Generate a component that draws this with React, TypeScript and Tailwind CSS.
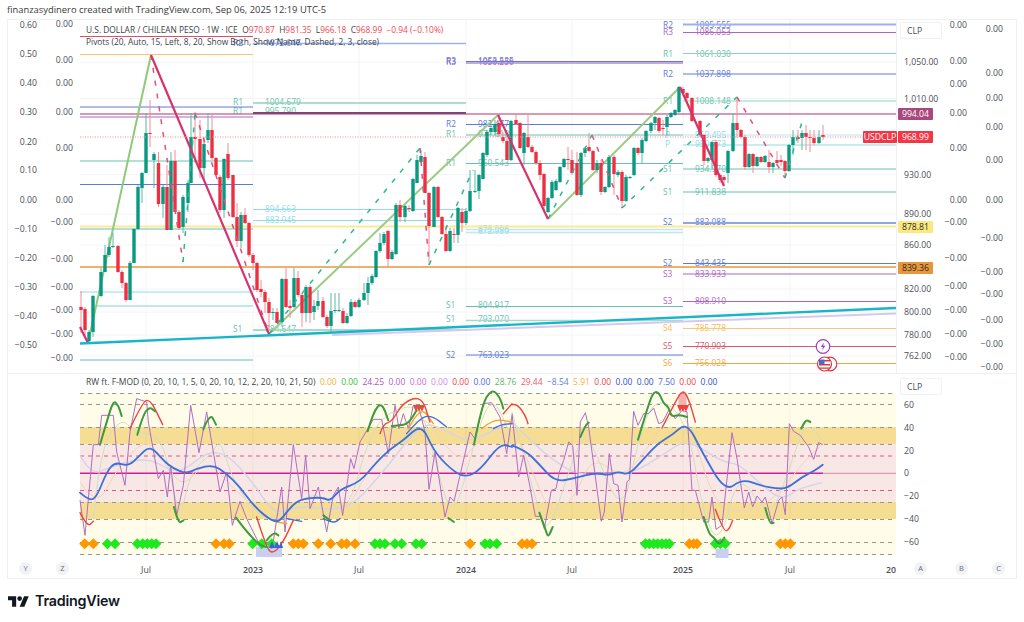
import React from "react";

type Candle = [number, "g" | "r", number, number, number, number];
type Pt = [number, number];

// x, colour, body top, body bottom, wick high, wick low (all in page pixels)
const CANDLES: Candle[] = [
  [81, "r", 307, 310, 291, 333], [85, "r", 309, 330, 307, 337], [89, "g", 332, 341, 330, 344], [93, "g", 296, 332, 295, 337],
  [101, "g", 272, 296, 268, 297], [105, "g", 255, 272, 245, 272], [109, "g", 247, 255, 237, 257], [113, "g", 246, 247, 233, 248],
  [118, "r", 246, 272, 245, 273], [122, "r", 272, 283, 270, 288], [126, "r", 283, 300, 282, 302], [130, "g", 263, 300, 261, 300],
  [134, "g", 229, 263, 228, 263], [138, "g", 187, 229, 185, 230], [142, "g", 173, 188, 172, 203], [146, "g", 133, 173, 113, 173],
  [150, "r", 133, 134, 100, 147], [154, "g", 154, 160, 152, 188], [158.5, "r", 163, 204, 152, 207], [163, "g", 187, 204, 185, 218],
  [167, "r", 187, 230, 165, 230], [171, "g", 161, 230, 152, 230], [175, "r", 161, 212, 150, 212], [179, "r", 212, 228, 210, 230],
  [183, "g", 197, 227, 195, 233], [188, "g", 183, 203, 180, 212], [191, "g", 137, 183, 113, 183], [195, "r", 137, 139, 112, 163],
  [200, "r", 139, 168, 120, 178], [204, "g", 144, 168, 137, 180], [208, "g", 130, 140, 113, 143], [212, "r", 130, 158, 113, 160],
  [216, "r", 158, 175, 157, 176], [220, "r", 177, 210, 175, 213], [224, "g", 159, 210, 158, 218], [228, "r", 154, 178, 143, 180],
  [233, "r", 175, 217, 175, 218], [237, "r", 217, 241, 203, 247], [241, "g", 215, 241, 212, 248], [245, "r", 215, 223, 208, 224],
  [249, "r", 223, 255, 222, 257], [253, "r", 255, 263, 253, 270], [257, "r", 263, 290, 262, 292], [261, "r", 289, 292, 280, 297],
  [265, "r", 292, 302, 290, 313], [269, "r", 302, 313, 298, 330], [273, "g", 312, 313, 308, 320], [277, "r", 312, 323, 308, 323],
  [282, "g", 279, 322, 278, 327], [286, "r", 279, 307, 268, 308], [290, "r", 306, 308, 300, 318], [294, "g", 278, 307, 268, 308],
  [298, "r", 278, 295, 271, 297], [302, "r", 295, 313, 293, 327], [306, "g", 287, 313, 285, 322], [310, "r", 287, 313, 285, 323],
  [314, "g", 306, 312, 300, 320], [318, "g", 301, 306, 290, 310], [323, "r", 301, 317, 297, 318], [327, "r", 317, 326, 315, 328],
  [331, "g", 311, 326, 293, 332], [335, "g", 310, 311, 293, 313], [339, "g", 310, 311, 293, 312], [343, "r", 311, 323, 308, 324],
  [347, "g", 316, 323, 313, 324], [351, "g", 302, 316, 299, 317], [355, "r", 302, 307, 300, 308], [359, "g", 300, 307, 298, 308],
  [364, "g", 293, 300, 283, 301], [368, "g", 283, 293, 277, 305], [372, "g", 276, 283, 274, 285], [376, "g", 251, 277, 250, 278],
  [380, "g", 243, 251, 233, 253], [384, "g", 234, 243, 232, 245], [388, "r", 231, 259, 230, 267], [392, "g", 252, 259, 250, 260],
  [396, "g", 205, 254, 203, 255], [400, "r", 205, 217, 200, 222], [405, "g", 206, 217, 205, 222], [409, "r", 208, 209, 205, 212],
  [413, "g", 179, 211, 178, 212], [417, "g", 160, 183, 155, 183], [421, "g", 156, 162, 150, 163], [425, "r", 157, 193, 152, 193],
  [429, "r", 193, 226, 192, 265], [434, "g", 187, 227, 186, 227], [438, "r", 187, 217, 186, 218], [442, "r", 217, 234, 216, 235],
  [446, "r", 234, 251, 226, 252], [450, "g", 231, 251, 228, 252], [454, "r", 234, 235, 228, 243], [458, "g", 208, 235, 207, 243],
  [462, "r", 212, 223, 208, 232], [466, "g", 211, 223, 208, 225], [470, "g", 191, 211, 170, 212], [475, "g", 191, 192, 170, 193],
  [479, "g", 175, 191, 174, 199], [483, "g", 153, 179, 152, 179], [487, "g", 132, 155, 130, 157], [491, "g", 128, 132, 125, 135],
  [495, "g", 124, 132, 120, 135], [499, "r", 123, 134, 114, 137], [503, "r", 137, 141, 132, 143], [507, "r", 141, 160, 137, 160],
  [511, "g", 121, 160, 120, 161], [516, "r", 120, 124, 115, 125], [520, "r", 123, 148, 122, 149], [524, "g", 133, 153, 132, 165],
  [528, "r", 137, 147, 113, 148], [532, "r", 147, 152, 145, 153], [536, "r", 152, 163, 150, 165], [540, "r", 163, 175, 160, 180],
  [544, "r", 174, 206, 173, 212], [548, "g", 198, 212, 197, 213], [552, "g", 182, 198, 180, 199], [556, "g", 181, 190, 179, 191],
  [560, "g", 167, 182, 166, 183], [564, "g", 159, 167, 158, 168], [568, "r", 159, 160, 147, 170], [572, "r", 160, 173, 150, 175],
  [577, "r", 163, 195, 152, 196], [581, "g", 153, 195, 152, 197], [585, "g", 148, 153, 147, 157], [589, "r", 147, 151, 133, 152],
  [593, "r", 151, 170, 150, 171], [597, "g", 163, 170, 160, 173], [601, "r", 163, 192, 160, 195], [605, "g", 187, 192, 186, 193],
  [609, "g", 157, 187, 155, 188], [614, "r", 157, 174, 155, 195], [618, "g", 172, 175, 170, 177], [622, "r", 172, 201, 170, 208],
  [626, "g", 177, 201, 175, 202], [630, "g", 177, 178, 176, 179], [634, "g", 148, 175, 147, 176], [638, "r", 148, 153, 147, 155],
  [642, "g", 140, 153, 138, 163], [646, "g", 131, 141, 130, 142], [651, "g", 123, 131, 122, 133], [655, "g", 117, 123, 116, 130],
  [659, "r", 118, 131, 117, 133], [663, "r", 128, 129, 120, 135], [667, "g", 117, 127, 115, 135], [671, "g", 113, 117, 112, 118],
  [675, "g", 110, 115, 109, 116], [679, "g", 87, 112, 86, 113], [683, "r", 89, 93, 87, 94], [687, "r", 93, 98, 92, 100],
  [692, "r", 98, 121, 97, 122], [700, "r", 121, 135, 120, 137], [704, "r", 135, 161, 134, 165], [708, "g", 158, 161, 157, 163],
  [712, "g", 142, 160, 141, 168], [716, "r", 142, 175, 140, 177], [720, "r", 175, 180, 174, 183], [724, "r", 177, 180, 175, 185],
  [728, "g", 151, 173, 150, 183], [733, "g", 123, 151, 113, 152], [737, "r", 123, 130, 97, 138], [741, "r", 130, 137, 129, 138],
  [745, "r", 137, 167, 135, 170], [749, "g", 154, 167, 153, 168], [753, "r", 154, 166, 153, 173], [757, "g", 157, 166, 156, 167],
  [761, "r", 157, 162, 156, 163], [765, "g", 156, 162, 155, 163], [769, "r", 162, 167, 150, 173], [773, "g", 163, 167, 162, 173],
  [777, "r", 160, 163, 151, 166], [781, "r", 160, 162, 155, 166], [785, "r", 161, 171, 160, 178], [789, "g", 145, 171, 144, 172],
  [793, "g", 137, 145, 130, 155], [798, "r", 137, 139, 130, 143], [802, "g", 133, 138, 130, 150], [806, "r", 133, 137, 125, 150],
  [810, "r", 137, 138, 130, 152], [814, "r", 138, 143, 130, 145], [819, "g", 137, 143, 130, 144], [823, "r", 135, 137, 125, 140],
];

const TEAL = "#66c2ae";
const BLUE = "#5e7ad8";
const PURPLE = "#ab66c0";
const CYAN = "#8fdbe8";

// x1, x2, y, colour, thickness
const PIVOT_LINES: [number, number, number, string, number][] = [
  [80, 253, 36.5, "#d9506a", 1], [80, 253, 54.5, "#f5c76e", 1], [80, 253, 107, BLUE, 1], [80, 253, 117, PURPLE, 1],
  [80, 253, 161, TEAL, 1], [80, 253, 184.5, BLUE, 1], [80, 253, 229, TEAL, 1], [80, 253, 292, CYAN, 1],
  [96, 253, 306, "#bfe8ee", 2], [80, 253, 360, TEAL, 1],
  [253, 466, 43.5, "#9db2ec", 1.5], [253, 466, 103, "#8fd3bd", 1.5], [253, 466, 113, "#6d4c7d", 2],
  [253, 466, 209.5, CYAN, 1], [253, 466, 220.5, CYAN, 1], [253, 466, 330, "#a9d9c9", 2],
  [466, 683, 61.5, BLUE, 1], [466, 683, 63, "#b58ad0", 1.5], [466, 683, 124.5, BLUE, 1], [466, 683, 135, TEAL, 1],
  [466, 683, 163.5, TEAL, 1], [466, 683, 229.5, "#bfe8ee", 1.5], [466, 683, 232.5, "#bfe8ee", 1.5],
  [466, 683, 306.5, TEAL, 1], [466, 683, 320.5, "#a9d9c9", 1.5], [466, 683, 355, BLUE, 1],
  [683, 896, 24.5, "#9db2ec", 2], [683, 896, 32.5, PURPLE, 1], [683, 896, 53.5, "#8fd3bd", 1], [683, 896, 74, BLUE, 1],
  [683, 896, 101, "#8fd3bd", 1], [683, 896, 135, "#b8e8f0", 1], [683, 896, 145, CYAN, 1], [683, 896, 169, TEAL, 1],
  [683, 896, 192, TEAL, 1], [683, 896, 223, "#8ea6e6", 2], [683, 896, 263.5, BLUE, 1], [683, 896, 274, PURPLE, 1],
  [683, 896, 301.5, PURPLE, 1], [683, 896, 328.5, "#f8c97a", 1], [683, 896, 346.5, "#d9596c", 1], [683, 896, 363.5, "#f5a742", 1],
];

// name, value, name x, value x, baseline y, colour
const PIVOT_LABELS: [string, string, number, number, number, string][] = [
  ["R2", "1095.555", 663, 695, 27.5, BLUE], ["R3", "1086.053", 663, 695, 34.5, PURPLE], ["R1", "1061.030", 663, 695, 56.5, TEAL],
  ["R2", "1037.898", 663, 695, 76.5, BLUE], ["R1", "1008.148", 663, 695, 103.5, TEAL], ["P", "959.495", 665, 695, 138, CYAN],
  ["P", "950.773", 665, 695, 147, CYAN], ["S1", "934.970", 663, 695, 172, TEAL], ["S1", "911.838", 663, 695, 194.5, TEAL],
  ["S2", "882.088", 663, 695, 225, BLUE], ["S2", "843.435", 663, 695, 266, BLUE], ["S3", "833.933", 663, 695, 276.5, PURPLE],
  ["S3", "808.910", 663, 695, 304, PURPLE], ["S4", "785.778", 663, 695, 331, "#f5b94e"], ["S5", "770.903", 663, 695, 348.5, "#d9596c"],
  ["S6", "756.028", 663, 695, 366, "#f5a742"],
  ["R3", "1050.250", 446, 478, 65, PURPLE], ["R3", "1053.535", 446, 478, 63.5, BLUE], ["R2", "982.477", 446, 478, 127, BLUE],
  ["R1", "971.610", 446, 478, 137, TEAL], ["R1", "960.543", 446, 478, 166, TEAL], ["", "875.996", 446, 478, 232, CYAN],
  ["", "872.980", 446, 478, 234, CYAN], ["S1", "804.917", 446, 478, 308, TEAL], ["S1", "793.070", 446, 478, 322, TEAL],
  ["S2", "763.023", 446, 478, 358, BLUE],
  ["R2", "1072.647", 233, 265, 46, BLUE], ["R1", "1004.679", 233, 265, 105, TEAL], ["R1", "995.790", 233, 265, 114, TEAL],
  ["", "894.663", 233, 265, 212, CYAN], ["", "883.945", 233, 265, 223, CYAN], ["S1", "784.647", 233, 265, 332, TEAL],
];

const AXIS_A: [string, number][] = [
  ["0.60", 25], ["0.50", 54], ["0.40", 83], ["0.30", 112], ["0.20", 142], ["0.10", 170], ["0.00", 200],
  ["−0.10", 229], ["−0.20", 258], ["−0.30", 287], ["−0.40", 316], ["−0.50", 345],
];
const AXIS_B: [string, number][] = [
  ["0.00", 24], ["0.00", 60], ["0.00", 83], ["0.00", 112], ["0.00", 148], ["0.00", 200], ["−0.00", 222],
  ["−0.00", 259], ["−0.00", 287], ["−0.00", 310], ["−0.00", 334], ["−0.00", 358],
];
const AXIS_C: [string, number][] = [
  ["0.00", 25], ["0.00", 61], ["0.00", 84], ["0.00", 113], ["0.00", 148], ["0.00", 200], ["−0.00", 222],
  ["−0.00", 258], ["−0.00", 286], ["−0.00", 310], ["−0.00", 334], ["−0.00", 357],
];
const AXIS_D: [string, number][] = [
  ["0.00", 29], ["0.00", 73], ["0.00", 98], ["0.00", 127], ["0.00", 160], ["0.00", 200], ["−0.00", 238],
  ["−0.00", 272], ["−0.00", 294], ["−0.00", 320], ["−0.00", 344], ["−0.00", 367],
];
const PRICES: [string, number][] = [
  ["1,050.00", 62], ["1,010.00", 98.5], ["930.00", 174.5], ["890.00", 214], ["860.00", 245],
  ["820.00", 289], ["800.00", 312], ["780.00", 335], ["762.00", 356],
];
const GRID_X = [146, 253, 359, 466, 572, 683, 790];

// traces below were read off zoomed crops, so they are in crop units
const left = (p: Pt[]) => p.map(([x, y]): Pt => [x / 3, 372 + y / 3]);
const right = (p: Pt[]) => p.map(([x, y]): Pt => [512 + x / 3, 372 + y / 3]);
const poly = (p: Pt[]) => p.map(([x, y]) => `${x},${y}`).join(" ");

// rounds the corners of a trace through the midpoints
const smooth = (p: Pt[]) => {
  if (p.length < 3) return `M${p.map(([x, y]) => `${x} ${y}`).join("L")}`;
  let d = `M${p[0][0]} ${p[0][1]}`;
  for (let i = 1; i < p.length - 1; i++) {
    const mx = (p[i][0] + p[i + 1][0]) / 2;
    const my = (p[i][1] + p[i + 1][1]) / 2;
    d += `Q${p[i][0]} ${p[i][1]} ${mx} ${my}`;
  }
  const last = p[p.length - 1];
  return `${d}L${last[0]} ${last[1]}`;
};

const BLUE_L: Pt[] = [[240, 362], [268, 387], [290, 375], [320, 300], [345, 270], [385, 283], [415, 255], [450, 220], [490, 265], [520, 290], [560, 305], [590, 290], [640, 278], [680, 305], [720, 345], [760, 400], [805, 440], [835, 452], [860, 420], [895, 382], [965, 375], [990, 388], [1020, 352], [1080, 330], [1130, 270], [1170, 232], [1210, 205], [1265, 155], [1300, 235], [1350, 290], [1395, 317], [1440, 295], [1500, 215], [1536, 225]];
const BLUE_R: Pt[] = [[0, 220], [40, 235], [80, 275], [130, 330], [190, 318], [250, 302], [290, 310], [320, 298], [350, 310], [400, 255], [440, 212], [480, 190], [525, 150], [570, 240], [640, 360], [690, 320], [750, 342], [790, 349], [825, 350], [870, 315], [910, 295], [932, 278]];
const BLUE_BITS: Pt[][] = [
  [[1220, 185], [1260, 138], [1295, 130], [1340, 165]],
  [[1480, 170], [1500, 158], [1536, 155]],
  [[860, 440], [905, 448]],
  [[970, 440], [1000, 455], [1020, 440]],
];
const PURPLE_L: Pt[] = [[240, 385], [255, 490], [280, 218], [295, 218], [305, 130], [340, 130], [350, 240], [375, 340], [390, 180], [410, 80], [440, 90], [445, 150], [475, 320], [490, 295], [502, 375], [512, 280], [530, 430], [550, 340], [572, 100], [597, 242], [620, 120], [660, 360], [680, 300], [697, 460], [720, 388], [740, 440], [775, 510], [800, 510], [815, 540], [845, 345], [855, 480], [880, 218], [905, 380], [917, 250], [930, 410], [955, 345], [980, 480], [1000, 370], [1015, 345], [1028, 430], [1052, 260], [1062, 290], [1080, 210], [1120, 142], [1145, 142], [1165, 245], [1185, 100], [1197, 170], [1210, 125], [1225, 170], [1240, 100], [1255, 100], [1275, 180], [1287, 352], [1305, 240], [1335, 435], [1350, 375], [1362, 388], [1410, 180], [1425, 200], [1450, 95], [1475, 92], [1500, 135], [1520, 245], [1536, 130]];
const PURPLE_R: Pt[] = [[0, 125], [20, 315], [35, 250], [55, 350], [70, 433], [85, 433], [97, 470], [118, 355], [132, 350], [142, 300], [155, 265], [170, 210], [182, 220], [195, 370], [205, 150], [220, 122], [230, 165], [268, 448], [277, 420], [292, 245], [305, 335], [318, 340], [330, 450], [345, 330], [352, 322], [365, 118], [378, 160], [395, 125], [410, 125], [425, 108], [440, 155], [452, 150], [470, 115], [490, 140], [510, 115], [525, 120], [540, 355], [550, 355], [575, 450], [590, 450], [600, 375], [612, 472], [630, 460], [660, 182], [675, 260], [697, 408], [710, 360], [722, 405], [735, 372], [750, 390], [760, 375], [780, 455], [800, 385], [810, 375], [820, 428], [832, 155], [845, 178], [865, 190], [890, 225], [905, 262], [920, 212], [932, 218]];
const GREEN_L: Pt[][] = [
  [[300, 218], [320, 150], [340, 85], [355, 100], [365, 132]],
  [[412, 188], [430, 125], [450, 105], [465, 118]],
  [[522, 405], [535, 455], [550, 445]],
  [[610, 172], [630, 122], [648, 158]],
  [[708, 437], [740, 480], [780, 520], [800, 525]],
  [[800, 505], [820, 480], [835, 490]],
  [[970, 430], [990, 445]],
  [[1103, 178], [1120, 120], [1145, 90], [1165, 145]],
  [[1175, 162], [1200, 160], [1225, 155], [1250, 115]],
  [[1345, 438], [1362, 450]],
  [[1422, 218], [1445, 100], [1475, 50], [1500, 75], [1510, 110]],
];
const GREEN_R: Pt[][] = [
  [[82, 422], [100, 470], [108, 498], [122, 465]],
  [[205, 195], [220, 160], [230, 152]],
  [[378, 203], [410, 95], [425, 60], [440, 60], [455, 95], [470, 105], [478, 135], [500, 128], [525, 135]],
  [[575, 435], [590, 485], [605, 495], [622, 520], [637, 497]],
  [[760, 408], [772, 455], [785, 452]],
  [[868, 170], [880, 142], [895, 150]],
];
const RED_L: Pt[][] = [
  [[240, 422], [262, 465], [280, 448]],
  [[390, 170], [430, 85], [450, 85], [470, 120], [488, 158]],
  [[770, 435], [800, 530], [820, 545], [850, 510], [880, 445]],
  [[1140, 185], [1150, 155], [1175, 150], [1210, 90], [1265, 72], [1290, 150]],
  [[1510, 125], [1536, 95]],
];
const RED_R: Pt[][] = [
  [[0, 98], [15, 95], [40, 130], [48, 155]],
  [[450, 168], [490, 90], [512, 52], [530, 80], [550, 150]],
  [[610, 412], [635, 478], [650, 475], [662, 445]],
];
const ORANGE_L: Pt[][] = [
  [[1445, 170], [1480, 140], [1536, 150]],
  [[830, 450], [860, 455]],
  [[1225, 170], [1260, 100], [1300, 155]],
];
const LAVENDER_L: Pt[] = [[240, 250], [275, 310], [330, 285], [440, 255], [520, 300], [560, 290], [620, 240], [680, 245], [750, 320], [800, 395], [835, 425], [900, 400], [1040, 420], [1150, 300], [1265, 150], [1330, 170], [1400, 210], [1450, 190], [1536, 150]];
const LAVENDER_R: Pt[] = [[0, 150], [60, 210], [130, 270], [200, 310], [300, 305], [370, 300], [450, 250], [525, 200], [630, 270], [680, 275], [750, 340], [810, 385], [860, 350], [930, 332]];
const PEACH_L: Pt[] = [[240, 330], [290, 410], [350, 290], [440, 195], [500, 280], [550, 350], [620, 260], [700, 350], [800, 440], [880, 440], [950, 430], [1040, 420], [1100, 300], [1180, 220], [1265, 120], [1330, 215], [1385, 270], [1440, 200], [1536, 140]];
const PEACH_R: Pt[] = [[0, 150], [60, 300], [120, 435], [190, 375], [240, 250], [330, 320], [400, 240], [470, 130], [525, 120], [610, 410], [690, 420], [760, 400], [830, 330], [880, 262], [932, 218]];
const SAGE_L: Pt[] = [[280, 440], [300, 230], [365, 135], [400, 180], [480, 190], [510, 300], [540, 450], [570, 300], [640, 240], [660, 200], [700, 330], [780, 440], [840, 430], [950, 350], [1040, 440], [1110, 180], [1180, 110], [1265, 100], [1310, 290], [1360, 450], [1420, 220], [1475, 60], [1536, 200]];
const SAGE_R: Pt[] = [[0, 120], [80, 420], [110, 490], [205, 190], [240, 210], [330, 440], [378, 205], [430, 70], [525, 140], [575, 435], [625, 520], [680, 290], [770, 450], [830, 300], [880, 145], [932, 205]];

const ORANGE_DOTS = [254, 280, 648, 672, 688, 880, 895, 910, 955, 992, 1025, 1040, 1065, 1410, 512 * 3 + 30, 512 * 3 + 45, 512 * 3 + 60, 512 * 3 + 532, 512 * 3 + 545, 512 * 3 + 555, 512 * 3 + 805, 512 * 3 + 820, 512 * 3 + 835];
const LIME_DOTS = [322, 345, 412, 428, 442, 455, 468, 758, 785, 815, 1125, 1140, 1155, 1185, 1205, 1248, 1265, 1455, 1470, 1490, 512 * 3 + 400, 512 * 3 + 412, 512 * 3 + 425, 512 * 3 + 437, 512 * 3 + 450, 512 * 3 + 462, 512 * 3 + 472, 512 * 3 + 610, 512 * 3 + 625, 512 * 3 + 640];

const AxisColumn = ({ items, x, anchor = "end" }: { items: [string, number][]; x: number; anchor?: "start" | "end" }) => (
  <g textAnchor={anchor}>
    {items.map(([label, y], i) => (
      <text key={i} x={x} y={y + 3} fill="#4a4e57" fontSize="8.7">
        {label}
      </text>
    ))}
  </g>
);

const PricePane = () => (
  <svg viewBox="8 20 1008 353" className="block w-[1008px] h-[353px] overflow-visible">
    {GRID_X.map((x) => (
      <line key={x} x1={x} x2={x} y1="20" y2="373" stroke="#f3f4f6" />
    ))}
    {PRICES.map(([, y]) => (
      <line key={y} x1="80" x2="896" y1={y} y2={y} stroke="#f3f4f6" />
    ))}
    <line x1="896.5" x2="896.5" y1="20" y2="373" stroke="#eef0f3" />

    {PIVOT_LABELS.map(([name, value, nx, vx, y, color], i) => (
      <g key={i} fill={color} fontSize="8.4">
        <text x={nx} y={y}>{name}</text>
        <text x={vx} y={y}>{value}</text>
      </g>
    ))}
    {PIVOT_LINES.map(([x1, x2, y, color, h], i) => (
      <line key={i} x1={x1} x2={x2} y1={y} y2={y} stroke={color} strokeWidth={h} />
    ))}

    <line x1="80" x2="896" y1="114" y2="114" stroke="#b8336c" strokeWidth="1.2" />
    <line x1="80" x2="896" y1="226.5" y2="226.5" stroke="#fbe99a" strokeWidth="2" />
    <line x1="80" x2="896" y1="267" y2="267" stroke="#e8963c" strokeWidth="1.3" />
    <line x1="332" y1="335" x2="896" y2="313.5" stroke="#d6c9ee" strokeWidth="2" />

    <polyline points="88,343 151,55" fill="none" stroke="#8fc97a" strokeWidth="2" />
    <polyline points="269,334 498,115" fill="none" stroke="#9ccb85" strokeWidth="2" />
    <polyline points="548,219 680,87" fill="none" stroke="#9ccb85" strokeWidth="2" />

    {CANDLES.map(([x, c, top, bot, hi, lo], i) => (
      <g key={i}>
        <line x1={x} x2={x} y1={hi} y2={lo} stroke={c === "g" ? "#5bb9a6" : "#f68a94"} />
        <rect x={x - 1.7} y={top} width="3.4" height={Math.max(bot - top, 1)} fill={c === "g" ? "#089981" : "#ee2f42"} />
      </g>
    ))}

    <g fill="none" strokeWidth="1.5" strokeDasharray="5 8">
      <polyline points="151,55 183,262" stroke="#e0507a" />
      <polyline points="195,113 269,334" stroke="#e0507a" />
      <polyline points="420,148 429,265" stroke="#e0507a" />
      <polyline points="592,135 622,208" stroke="#e0507a" />
      <polyline points="737,97 785,178" stroke="#e0507a" />
      <polyline points="183,262 195,113" stroke="#2bb88f" />
      <polyline points="269,334 420,148" stroke="#2bb88f" />
      <polyline points="429,265 473,170" stroke="#2bb88f" />
      <polyline points="548,219 592,135" stroke="#2bb88f" />
      <polyline points="622,208 737,97" stroke="#2bb88f" />
      <polyline points="785,178 802,122" stroke="#2bb88f" />
    </g>
    <polyline points="80,327 88,343" fill="none" stroke="#d6336c" strokeWidth="2.2" />
    <polyline points="151,55 269,334" fill="none" stroke="#d6336c" strokeWidth="2.2" />
    <polyline points="498,115 548,219" fill="none" stroke="#d6336c" strokeWidth="2.2" />
    <polyline points="680,87 724,186" fill="none" stroke="#d6336c" strokeWidth="2.2" />

    <line x1="80" y1="343.5" x2="896" y2="308" stroke="#17b5c9" strokeWidth="2.4" />
    <line x1="80" x2="896" y1="137" y2="137" stroke="#f28a94" strokeDasharray="1 1.5" />

    <circle cx="823" cy="346.5" r="6.8" fill="#fff" stroke="#9c3fc0" strokeWidth="1.2" />
    <path d="M824 342.5l-3.2 4.6h2.2l-1 3.4 3.4-4.8h-2.2z" fill="#9c3fc0" />
    <circle cx="830" cy="364" r="6.8" fill="#fff" stroke="#e0353f" strokeWidth="1.2" />
    <circle cx="824.5" cy="364" r="7" fill="#fff" stroke="#e0353f" strokeWidth="1.2" />
    <path d="M819 360h11v1.6h-11zM819 364h11v1.6h-11zM819 367.4h11v1.4h-11z" fill="#e0353f" />
    <rect x="819" y="359.5" width="5.5" height="4.5" fill="#3f6fd8" />

    <AxisColumn items={AXIS_A} x={37} />
    <AxisColumn items={AXIS_B} x={73} />
    <AxisColumn items={PRICES} x={904} anchor="start" />
    <AxisColumn items={AXIS_C} x={967} />
    <AxisColumn items={AXIS_D} x={1003} />
  </svg>
);

const Diamond = ({ x, fill }: { x: number; fill: string }) => (
  <polygon points={`${x / 3 - 5.5},543.7 ${x / 3},538.2 ${x / 3 + 5.5},543.7 ${x / 3},549.2`} fill={fill} />
);

const OscillatorPane = () => (
  <svg viewBox="8 374 1008 204" className="block w-[1008px] h-[204px] overflow-visible">
    <rect x="80" y="393" width="816" height="161" fill="#fffde9" />
    <rect x="80" y="427" width="816" height="17" fill="#f5dd94" />
    <rect x="80" y="502" width="816" height="17" fill="#f5dd94" />
    <rect x="80" y="444" width="816" height="58" fill="#f7e8e6" />
    {GRID_X.map((x) => (
      <line key={x} x1={x} x2={x} y1="374" y2="560" stroke="#0000000a" />
    ))}
    {[393.5, 404.5, 427.5, 444.5, 502.5, 519.5, 542.5, 554.5].map((y) => (
      <line key={y} x1="80" x2="896" y1={y} y2={y} stroke="#9a9688" strokeDasharray="4 4" />
    ))}
    {[456, 490.5].map((y) => (
      <line key={y} x1="80" x2="896" y1={y} y2={y} stroke="#e0557f" strokeDasharray="4 4" />
    ))}
    <line x1="823" x2="896" y1="473.3" y2="473.3" stroke="#d98aa8" />
    <line x1="80" x2="823" y1="473.3" y2="473.3" stroke="#d81b9a" strokeWidth="1.4" />

    <g fill="none" strokeWidth="1">
      <path d={smooth(left(SAGE_L))} stroke="#cfe0c0" />
      <path d={smooth(right(SAGE_R))} stroke="#cfe0c0" />
      <path d={smooth(left(PEACH_L))} stroke="#f5d3b8" />
      <path d={smooth(right(PEACH_R))} stroke="#f5d3b8" />
      <path d={smooth(left(LAVENDER_L))} stroke="#d5d3e8" strokeWidth="1.4" />
      <path d={smooth(right(LAVENDER_R))} stroke="#d5d3e8" strokeWidth="1.4" />
      <polyline points={poly(left(PURPLE_L))} stroke="#b26cc2" />
      <polyline points={poly(right(PURPLE_R))} stroke="#b26cc2" />
    </g>

    <rect x="256" y="547" width="26" height="10" fill="#c9cff0" />
    <rect x="715.5" y="549" width="13" height="9" fill="#c9cff0" />
    <rect x="678.5" y="394" width="8" height="11" fill="#f4b0b0" />

    {ORANGE_DOTS.map((x, i) => (
      <Diamond key={i} x={x} fill="#ff9800" />
    ))}
    {LIME_DOTS.map((x, i) => (
      <Diamond key={i} x={x} fill="#1fe81f" />
    ))}

    <g fill="none" strokeLinejoin="round" strokeLinecap="round">
      {ORANGE_L.map((p, i) => (
        <path key={i} d={smooth(left(p))} stroke="#f59e2c" strokeWidth="1.3" />
      ))}
      {RED_L.map((p, i) => (
        <path key={i} d={smooth(left(p))} stroke="#ef4444" strokeWidth="1.4" />
      ))}
      {RED_R.map((p, i) => (
        <path key={i} d={smooth(right(p))} stroke="#ef4444" strokeWidth="1.4" />
      ))}
      {GREEN_L.map((p, i) => (
        <path key={i} d={smooth(left(p))} stroke="#3d9a3d" strokeWidth="2" />
      ))}
      {GREEN_R.map((p, i) => (
        <path key={i} d={smooth(right(p))} stroke="#3d9a3d" strokeWidth="2" />
      ))}
      {BLUE_BITS.map((p, i) => (
        <path key={i} d={smooth(left(p))} stroke="#3f6fd8" strokeWidth="1.4" />
      ))}
      <path d={smooth(left(BLUE_L))} stroke="#3f6fd8" strokeWidth="1.8" />
      <path d={smooth(right(BLUE_R))} stroke="#3f6fd8" strokeWidth="1.8" />
    </g>

    <path d="M269,548l3,-7 3,7zM274,548l3,-7 3,7zM279,548l2,-7 2,7z" fill="#3f5fd8" />
    <path d="M677,405l3,7 3,-7zM680,405l3,7 3,-7zM683,405l3,7 3,-7z" fill="#f24040" />
    <path d="M413,405l3,7 3,-7zM416,405l3,7 3,-7zM419,405l3,7 3,-7z" fill="#e05040" />

    <AxisColumn
      items={[["60", 405], ["40", 427.5], ["20", 450.5], ["0", 473], ["−20", 496], ["−40", 519], ["−60", 542]]}
      x={904}
      anchor="start"
    />
    <g fill="#4a4e57" fontSize="8.7" textAnchor="middle">
      {[["Jul", 146], ["Jul", 359], ["Jul", 572], ["Jul", 790]].map(([t, x]) => (
        <text key={x} x={x} y="573">{t}</text>
      ))}
      {[["2023", 253], ["2024", 466], ["2025", 683]].map(([t, x]) => (
        <text key={x} x={x} y="573" fontWeight="600">{t}</text>
      ))}
      <text x="891" y="573" fontWeight="600">20</text>
    </g>
  </svg>
);

const Round = ({ label, className = "" }: { label: string; className?: string }) => (
  <span className={`w-[13px] h-[13px] rounded-full bg-[#f0f2f6] text-[7.5px] leading-[13px] text-center text-[#6a6d78] ${className}`}>
    {label}
  </span>
);

const PriceTag = ({ label, className }: { label: string; className: string }) => (
  <span className={`w-[35px] h-[12px] text-[8.7px] leading-[12px] text-center rounded-[1px] ${className}`}>
    {label}
  </span>
);

const ClpBox = ({ className }: { className: string }) => (
  <span className={`absolute left-[892px] w-[42px] h-[17px] bg-white border border-[#f0f1f4] rounded-[2px] pl-[6px] text-[8.7px] leading-[16px] text-[#4a4e57] ${className}`}>
    CLP
  </span>
);

export default function App() {
  return (
    <div className="w-[1024px] h-[622px] bg-white overflow-hidden flex flex-col font-['Open_Sans',sans-serif] text-[#333]">
      <div className="h-[19px] pl-[7px] text-[9.4px] leading-[20px] text-[#3a3a3a]">
        finanzasydinero created with TradingView.com, Sep 06, 2025 12:19 UTC-5
      </div>

      <div className="ml-[7px] w-[1010px] h-[560px] border border-[#eef0f3] flex flex-col">
        <div className="relative h-[353px]">
          <PricePane />
          <div className="absolute left-[78px] top-[4px] text-[8.4px] leading-[12px] text-[#3c3f47] whitespace-nowrap">
            <div>
              U.S. DOLLAR / CHILEAN PESO · 1W · ICE&nbsp; O<span className="text-[#ee4a57]">970.87</span>&nbsp; H<span className="text-[#ee4a57]">981.35</span>&nbsp; L<span className="text-[#ee4a57]">966.18</span>&nbsp; C<span className="text-[#ee4a57]">968.99</span>&nbsp; <span className="text-[#ee4a57]">−0.94 (−0.10%)</span>
            </div>
            <div>Pivots (20, Auto, 15, Left, 8, 20, Show Both, Show Name, Dashed, 2, 3, close)</div>
          </div>
          <ClpBox className="top-[2px]" />
          <span className="absolute flex gap-px left-[855px] top-[111px]">
            <span className="w-[34px] h-[12px] bg-[#f23645] text-white text-[8.7px] leading-[12px] text-center rounded-[1px]">USDCLP</span>
            <PriceTag label="968.99" className="bg-[#f23645] text-white" />
          </span>
          <PriceTag label="994.04" className="absolute left-[890px] top-[88px] bg-[#a8487c] text-white" />
          <PriceTag label="878.81" className="absolute left-[890px] top-[201px] bg-[#fbe97f] text-[#2a2a2a]" />
          <PriceTag label="839.36" className="absolute left-[890px] top-[242px] bg-[#e8963c] text-[#2a2a2a]" />
        </div>

        <div className="h-px bg-[#eef0f3]" />

        <div className="relative h-[205px]">
          <OscillatorPane />
          <div className="absolute left-[78px] top-[2px] text-[8.5px] leading-[12px] whitespace-nowrap text-[#3c3f47]">
            RW ft. F-MOD (0, 20, 10, 1, 5, 0, 20, 10, 12, 2, 20, 10, 21, 50)&nbsp; <span className="text-[#f5b23c]">0.00</span>&nbsp; <span className="text-[#35c535]">0.00</span>&nbsp; <span className="text-[#a855b8]">24.25</span>&nbsp; <span className="text-[#b064c8]">0.00</span>&nbsp; <span className="text-[#c86ad8]">0.00</span>&nbsp; <span className="text-[#d08ae0]">0.00</span>&nbsp; <span className="text-[#ef4444]">0.00</span>&nbsp; <span className="text-[#4a6ed8]">0.00</span>&nbsp; <span className="text-[#62b56a]">28.76</span>&nbsp; <span className="text-[#ee5a6a]">29.44</span>&nbsp; <span className="text-[#5f7fd8]">−8.54</span>&nbsp; <span className="text-[#f5b23c]">5.91</span>&nbsp; <span className="text-[#ef4444]">0.00</span>&nbsp; <span className="text-[#3050c8]">0.00</span>&nbsp; <span className="text-[#3050c8]">0.00</span>&nbsp; <span className="text-[#4a6ed8]">7.50</span>&nbsp; <span className="text-[#ef4444]">0.00</span>&nbsp; <span className="text-[#3050c8]">0.00</span>
          </div>
          <ClpBox className="top-[4px]" />
          <div className="absolute inset-x-0 bottom-[3px] flex px-[11px]">
            <Round label="Y" />
            <Round label="Z" className="ml-[24px]" />
            <Round label="A" className="ml-auto" />
            <Round label="B" className="ml-[28px]" />
            <Round label="C" className="ml-[24px]" />
          </div>
        </div>
      </div>

      <div className="flex items-center gap-[6px] pl-[8px] mt-[12px]">
        <svg viewBox="0 4 36 18" className="w-[21px] h-[11px]" fill="#131722">
          <path d="M14 22H7V11H0V4h14v18zM28 22h-8l7.5-18h8L28 22z" />
          <circle cx="20" cy="8" r="4" />
        </svg>
        <span className="font-['Inter',sans-serif] font-semibold text-[14.3px] leading-[20px] tracking-[-0.2px] text-[#131722]">TradingView</span>
      </div>
    </div>
  );
}
